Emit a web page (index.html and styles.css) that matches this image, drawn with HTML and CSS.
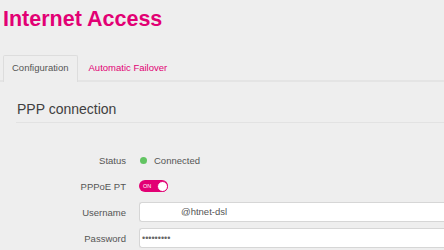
FILE: index.html
```html
<!DOCTYPE html>
<html>
<head>
<meta charset="utf-8">
<link rel="stylesheet" href="styles.css">
</head>
<body>
<div class="page">
  <h1 class="title">Internet Access</h1>
  <ul class="tabs">
    <li class="tab active">Configuration</li>
    <li class="tab">Automatic Failover</li>
  </ul>
  <h3 class="section-title">PPP connection</h3>
  <div class="form">
    <div class="row">
      <div class="label">Status</div>
      <div class="value"><span class="dot"></span>Connected</div>
    </div>
    <div class="row">
      <div class="label">PPPoE PT</div>
      <div class="value"><span class="toggle"><span class="toggle-text">ON</span><span class="knob"></span></span></div>
    </div>
    <div class="row">
      <div class="label">Username</div>
      <div class="value grow"><div class="field"><span class="masked"></span>@htnet-dsl</div></div>
    </div>
    <div class="row">
      <div class="label">Password</div>
      <div class="value grow"><div class="field pw">•••••••••</div></div>
    </div>
  </div>
</div>
</body>
</html>
```
FILE: styles.css
```css
html, body {
  margin: 0;
  padding: 0;
  background: #eeeeee;
  overflow: hidden;
}
body {
  font-family: "Liberation Sans", Arial, sans-serif;
  width: 444px;
  height: 250px;
}
.title {
  margin: 0;
  padding: 7px 0 0 3px;
  font-size: 21.5px;
  line-height: 24px;
  font-weight: bold;
  color: #e20074;
}
.tabs {
  list-style: none;
  margin: 24px 0 0 0;
  padding: 0 0 0 3px;
  display: flex;
  border-bottom: 2px solid #e4e4e4;
  height: 25px;
}
.tab {
  font-size: 9.5px;
  line-height: 24px;
  padding: 0 8px;
  color: #e20074;
  border: 1px solid transparent;
  border-bottom: none;
  margin-right: 2px;
}
.tab.active {
  color: #555555;
  background: #eeeeee;
  border-color: #dddddd;
  border-radius: 2px 2px 0 0;
  height: 26px;
}
.section-title {
  margin: 19px 0 0 16px;
  padding: 0 0 5px 1px;
  font-size: 14px;
  line-height: 16px;
  font-weight: normal;
  color: #404040;
  border-bottom: 1px solid #e2e2e2;
}
.form {
  margin-top: 24px;
  padding-left: 16px;
}
.row {
  display: flex;
  align-items: center;
  height: 26px;
}
.label {
  width: 110px;
  text-align: right;
  font-size: 9.5px;
  color: #555555;
  flex: none;
}
.value {
  margin-left: 13px;
  display: flex;
  align-items: center;
  font-size: 9.5px;
  color: #555555;
}
.value.grow {
  flex: 1;
  min-width: 0;
}
.dot {
  width: 7px;
  height: 7px;
  border-radius: 50%;
  background: #62c462;
  margin: 0 7px 0 1px;
}
.toggle {
  display: flex;
  align-items: center;
  justify-content: space-between;
  width: 29px;
  height: 12px;
  border-radius: 6px;
  background: #e20074;
  box-sizing: border-box;
  padding: 0 0 0 4px;
}
.toggle-text {
  font-size: 5.5px;
  color: #ffffff;
  line-height: 12px;
}
.knob {
  width: 11px;
  height: 11px;
  border-radius: 50%;
  background: #ffffff;
  box-sizing: border-box;
  border: 1px solid #e20074;
}
.field {
  flex: 1;
  height: 20px;
  box-sizing: border-box;
  background: #ffffff;
  border: 1px solid #d6d6d6;
  border-right: none;
  border-radius: 3px 0 0 3px;
  font-size: 9.5px;
  line-height: 18px;
  color: #555555;
  display: flex;
  align-items: center;
}
.masked {
  width: 41px;
  flex: none;
}
.field.pw {
  padding-left: 2px;
  color: #666666;
  font-size: 9px;
}
```
